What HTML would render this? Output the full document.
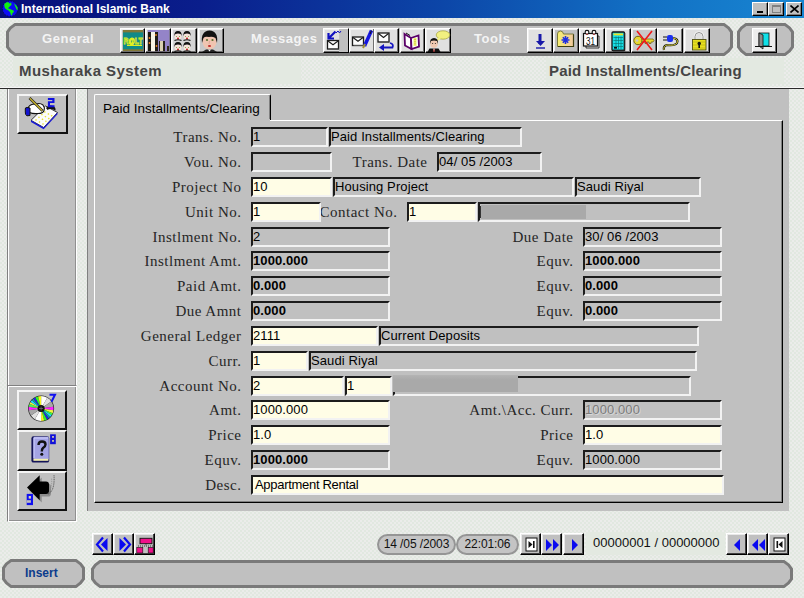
<!DOCTYPE html>
<html><head><meta charset="utf-8">
<style>
*{box-sizing:border-box;margin:0;padding:0}
html,body{width:804px;height:598px;overflow:hidden}
body{position:relative;background:#e6eae5 conic-gradient(#e1e8e0 25%,#ebecea 0 50%,#e1e8e0 0 75%,#ebecea 0) 0 0/4px 4px;font-family:"Liberation Sans",sans-serif;font-size:13px;color:#000}
.a{position:absolute}
#title{left:0;top:0;width:804px;height:18px;background:linear-gradient(90deg,#060f78 0%,#0a1e8c 25%,#0c46a8 55%,#1270c4 80%,#1886d2 100%)}
#title .t{left:21px;top:3px;color:#fff;font-weight:bold;font-size:12px;line-height:13px;white-space:nowrap}
.wb{top:2px;width:16px;height:14px;background:#c0c0c0;border:1px solid;border-color:#fff #000 #000 #fff;box-shadow:inset -1px -1px #808080}
.pill{border:3px solid #7a7a7a;background:#c0c0c0;border-radius:16px}
.tbt{color:#f4f4f4;font-weight:bold;font-size:13px;letter-spacing:0.55px;white-space:nowrap;top:32px;line-height:13px}
.ib{top:28px;width:25px;height:25px;background:#c0c0c0;border:1px solid;border-color:#fff #000 #000 #fff;box-shadow:inset -1px -1px #808080}
.ib svg{position:absolute;left:2px;top:2px}
.hdr{font-weight:bold;font-size:15px;color:#454545;top:63px;line-height:15px;white-space:nowrap}
.lbl{font-family:"Liberation Serif",serif;font-size:15px;line-height:15px;letter-spacing:0.5px;white-space:nowrap;text-align:right;color:#262626}
.f{height:20px;border:2px solid;border-color:#1c1c1c #f2f2f2 #f2f2f2 #1c1c1c;background:#c0c0c0;font-size:13px;line-height:14px;letter-spacing:0.1px;padding:1px 0 0 0;white-space:nowrap;overflow:hidden}
.y{background:#fffde6}
.desc{padding-left:2px;letter-spacing:-0.3px}
.b{font-weight:bold}
.dis{color:#7c7c7c;text-shadow:1px 1px #d8d8d8}
.blur{display:inline-block;height:11px;margin-top:2px;margin-left:1px;background:#9a9a9a;filter:blur(2px)}
.bt{border:1px solid;border-color:#fff #000 #000 #fff;box-shadow:inset -1px -1px #707070,inset 1px 1px #f0f0f0}
.bt2{z-index:2;border:2px solid;border-color:#f4f4f4 #101010 #101010 #f4f4f4}
.bt3{background:#c0c0c0;border:1px solid;border-color:#fff #000 #000 #fff;box-shadow:inset -1px -1px #404040,inset 1px 1px #e8e8e8}
.dp{border:2px solid #959595;background:#c4c4c4;border-radius:11px;font-size:12px;letter-spacing:-0.1px;line-height:15px;text-align:center;color:#111;white-space:nowrap;padding-top:1px}
.btn{background:#c0c0c0;border:1px solid;border-color:#fff #000 #000 #fff;box-shadow:inset -1px -1px #808080}
.nb{top:533px;width:21px;height:22px;background:#c0c0c0;border:1px solid;border-color:#fff #000 #000 #fff;box-shadow:inset -1px -1px #808080}
.nb svg{position:absolute;left:0;top:0}
</style></head><body>

<!-- title bar -->
<div id="title" class="a">
  <svg class="a" style="left:0;top:0" width="20" height="18" viewBox="0 0 20 18"><circle cx="10.2" cy="8.7" r="7.7" fill="#0c0cf6" stroke="#08083a" stroke-width="0.8" stroke-dasharray="1.2 1.6"/><path d="M4.2 4 Q6 2 8.5 2 L9 3.6 L11.2 2.6 L11.5 5 Q10 6 9.2 7 L8 8.2 L10.5 9.2 L13.5 10.5 L14 12 L12.5 13 L12 15.5 L11 15 L10 12 L8.5 10.5 L6.5 9.5 Q5 8.5 4.5 7Z" fill="#10f010"/><path d="M14 3.5 Q16 4.5 17.5 7 L17.8 10 L16.5 9.5 L15.5 7 Z" fill="#10f010"/></svg>
  <div class="a t">International Islamic Bank</div>
  <div class="a wb" style="left:752px"><div class="a" style="left:4px;top:8px;width:6px;height:2px;background:#000"></div></div>
  <div class="a wb" style="left:768px"><div class="a" style="left:3px;top:2px;width:9px;height:8px;border:1px solid #808080;border-top-width:2px"></div></div>
  <div class="a wb" style="left:786px"><svg class="a" style="left:3px;top:2px" width="9" height="8"><path d="M0.5 0.5 L8.5 7.5 M8.5 0.5 L0.5 7.5" stroke="#000" stroke-width="1.6"/></svg></div>
</div>

<!-- toolbar -->
<svg class="a" style="left:6px;top:23px" width="727" height="33"><path d="M9 1.5 L718 1.5 Q722.8 4.2 725.5 9 L725.5 24 Q722.8 28.8 718 31.5 L9 31.5 Q4.2 28.8 1.5 24 L1.5 9 Q4.2 4.2 9 1.5Z" fill="#c0c0c0" stroke="#7a7a7a" stroke-width="3"/></svg>
<div class="a tbt" style="left:42px">General</div>
<div class="a tbt" style="left:251px">Messages</div>
<div class="a tbt" style="left:474px">Tools</div>
<svg class="a" style="left:737px;top:23px" width="57" height="33"><path d="M9 1.5 L48 1.5 Q52.8 4.2 55.5 9 L55.5 24 Q52.8 28.8 48 31.5 L9 31.5 Q4.2 28.8 1.5 24 L1.5 9 Q4.2 4.2 9 1.5Z" fill="#c0c0c0" stroke="#7a7a7a" stroke-width="3"/></svg>

<div id="icons">
<div class="a bt" style="left:120px;top:28px;width:25px;height:25px;background:#c0c0c0"><svg class="a" style="left:0;top:0" width="25" height="25" viewBox="0 0 25 25"><rect x="2" y="1" width="20" height="21" fill="#807838"/><rect x="2" y="3.4" width="20" height="16.8" fill="#108a88"/><text x="12" y="14.5" font-family="Liberation Sans" font-weight="bold" font-size="8.5" textLength="19" lengthAdjust="spacingAndGlyphs" fill="none" stroke="#e0f020" stroke-width="0.8" text-anchor="middle">R@LT</text><path d="M6 16.5 H21" stroke="#e0f020" stroke-width="1"/></svg></div>
<div class="a bt" style="left:145px;top:28px;width:26px;height:25px;background:#c0c0c0"><svg class="a" style="left:0;top:0" width="26" height="25" viewBox="0 0 26 25"><rect x="2" y="1" width="21.4" height="21.2" fill="#9484c8"/><rect x="2" y="3" width="10" height="19.2" fill="#201c14"/><rect x="5" y="3" width="4" height="19.2" fill="#f8f4e4"/><rect x="13" y="12" width="6" height="10.2" fill="#28221a"/><rect x="14" y="12" width="3" height="10" fill="#d8d0b0"/><rect x="21" y="17" width="2" height="5" fill="#302818"/><circle cx="3.5" cy="9" r="0.9" fill="#f08020"/><circle cx="3.5" cy="14" r="0.9" fill="#f08020"/><circle cx="10" cy="6" r="0.9" fill="#f08020"/><circle cx="10.5" cy="17" r="0.9" fill="#f08020"/></svg></div>
<div class="a bt" style="left:171px;top:28px;width:26px;height:25px;background:#d4d4d4"><svg class="a" style="left:0;top:0" width="26" height="25" viewBox="0 0 26 25"><ellipse cx="6" cy="7.3" rx="3.3" ry="3.8" fill="#f6e4dc"/><path d="M2.4 7.0 Q2 2.0 6 2.0 Q10 2.0 9.6 7.0 L8.6 5.0 Q6 4.0 3.4 5.0Z" fill="#111"/><circle cx="4.5" cy="7.5" r="0.6" fill="#80a040"/><circle cx="7.5" cy="7.5" r="0.6" fill="#80a040"/><circle cx="6" cy="9.5" r="1" fill="#c02020"/><path d="M2.5 11.5 Q6 10.0 9.5 11.5" stroke="#111" stroke-width="1.2" fill="none"/><ellipse cx="15" cy="7.3" rx="3.3" ry="3.8" fill="#f6e4dc"/><path d="M11.4 7.0 Q11 2.0 15 2.0 Q19 2.0 18.6 7.0 L17.6 5.0 Q15 4.0 12.4 5.0Z" fill="#111"/><circle cx="13.5" cy="7.5" r="0.6" fill="#80a040"/><circle cx="16.5" cy="7.5" r="0.6" fill="#80a040"/><circle cx="15" cy="9.5" r="1" fill="#c02020"/><path d="M11.5 11.5 Q15 10.0 18.5 11.5" stroke="#111" stroke-width="1.2" fill="none"/><ellipse cx="6" cy="18.3" rx="3.3" ry="3.8" fill="#f6e4dc"/><path d="M2.4 18.0 Q2 13.0 6 13.0 Q10 13.0 9.6 18.0 L8.6 16.0 Q6 15.0 3.4 16.0Z" fill="#111"/><circle cx="4.5" cy="18.5" r="0.6" fill="#80a040"/><circle cx="7.5" cy="18.5" r="0.6" fill="#80a040"/><circle cx="6" cy="20.5" r="1" fill="#c02020"/><path d="M2.5 22.5 Q6 21.0 9.5 22.5" stroke="#111" stroke-width="1.2" fill="none"/><ellipse cx="15" cy="18.3" rx="3.3" ry="3.8" fill="#f6e4dc"/><path d="M11.4 18.0 Q11 13.0 15 13.0 Q19 13.0 18.6 18.0 L17.6 16.0 Q15 15.0 12.4 16.0Z" fill="#111"/><circle cx="13.5" cy="18.5" r="0.6" fill="#80a040"/><circle cx="16.5" cy="18.5" r="0.6" fill="#80a040"/><circle cx="15" cy="20.5" r="1" fill="#c02020"/><path d="M11.5 22.5 Q15 21.0 18.5 22.5" stroke="#111" stroke-width="1.2" fill="none"/></svg></div>
<div class="a bt" style="left:198px;top:28px;width:26px;height:25px;background:#c8c8c8"><svg class="a" style="left:0;top:0" width="26" height="25" viewBox="0 0 26 25"><ellipse cx="10.5" cy="12" rx="7.2" ry="8.5" fill="#f0c4b0"/><path d="M3 14 Q1.5 2 10.5 1.5 Q19.5 2 18 14 L16.5 9 Q13 7 10 8 Q6 7 4.5 9Z" fill="#111"/><circle cx="8" cy="11" r="1.1" fill="#587030"/><circle cx="13.5" cy="11" r="1.1" fill="#587030"/><path d="M10.5 12 L10 15" stroke="#d8a090" stroke-width="0.8"/><ellipse cx="10.5" cy="17" rx="1.6" ry="1.1" fill="#c03030"/><path d="M3 23 L7 20.5 L14 20.5 L18 23Z" fill="#222"/><path d="M9 20.5 L10.5 22.5 L12 20.5" fill="#fff"/></svg></div>
<div class="a bt" style="left:323px;top:28px;width:26px;height:25px;background:#e0e0e0"><svg class="a" style="left:0;top:0" width="26" height="25" viewBox="0 0 26 25"><rect x="15" y="0" width="9" height="23" fill="#c0c0c0"/><rect x="3.5" y="11.5" width="11" height="8.5" fill="#fcfcfc" stroke="#1a1a1a" stroke-width="1.3"/><path d="M14.5 20.0 H4.5 " stroke="#555" stroke-width="1"/><path d="M4.0 12.0 L9.0 15.75 L14.0 12.0" fill="none" stroke="#1a1a1a" stroke-width="1.1"/><path d="M11.5 2.5 L5 9 M4.5 4 V9.5 H10" stroke="#1010c0" stroke-width="2.2" fill="none"/><path d="M12 4 L14 2 L15.5 4 L17 2" stroke="#1010c0" stroke-width="1" fill="none"/></svg></div>
<div class="a bt" style="left:349px;top:28px;width:26px;height:25px;background:#e0e0e0"><svg class="a" style="left:0;top:0" width="26" height="25" viewBox="0 0 26 25"><rect x="2.5" y="8" width="11" height="8.5" fill="#fcfcfc" stroke="#1a1a1a" stroke-width="1.3"/><path d="M13.5 16.5 H3.5 " stroke="#555" stroke-width="1"/><path d="M3.0 8.5 L8.0 12.25 L13.0 8.5" fill="none" stroke="#1a1a1a" stroke-width="1.1"/><path d="M14.5 17 L21.5 1.5" stroke="#1515e0" stroke-width="3.5"/><path d="M21.5 1.5 L20 5" stroke="#111" stroke-width="1"/><path d="M13 19 L15 15" stroke="#a09030" stroke-width="2"/></svg></div>
<div class="a bt" style="left:374px;top:28px;width:25px;height:25px;background:#e0e0e0"><svg class="a" style="left:0;top:0" width="25" height="25" viewBox="0 0 25 25"><rect x="3" y="4" width="11" height="9" fill="#fcfcfc" stroke="#1a1a1a" stroke-width="1.3"/><path d="M14 13 H4 " stroke="#555" stroke-width="1"/><path d="M3.5 4.5 L8.5 8.5 L13.5 4.5" fill="none" stroke="#1a1a1a" stroke-width="1.1"/><path d="M15 14 Q19 15 17.5 18.5 L8 18.5" stroke="#1515c0" stroke-width="1.8" fill="none"/><path d="M4 18.5 L9 15 L9 22Z" fill="#1515c0"/></svg></div>
<div class="a bt" style="left:400px;top:28px;width:25px;height:25px;background:#e0e0e0"><svg class="a" style="left:0;top:0" width="25" height="25" viewBox="0 0 25 25"><path d="M3.5 5 L10 9 L10.5 20 L4 16.5Z" fill="#fff" stroke="#5a0068" stroke-width="1.8"/><path d="M10 9 L17.5 6.5 L18 17.5 L10.5 20Z" fill="#fff" stroke="#5a0068" stroke-width="1.8"/><path d="M5 4 L9 6.5" stroke="#111" stroke-width="1"/><rect x="12.5" y="9" width="3" height="8" fill="#f0f070"/><path d="M14 10 V16" stroke="#a0a020" stroke-width="0.8" stroke-dasharray="1 1.2"/></svg></div>
<div class="a bt" style="left:425px;top:28px;width:26px;height:25px;background:#e0e0e0"><svg class="a" style="left:0;top:0" width="26" height="25" viewBox="0 0 26 25"><ellipse cx="17" cy="6" rx="6.8" ry="4.2" fill="#f2f080" stroke="#a0a040" stroke-width="0.7"/><path d="M12 8.5 L10 13 L15 9.5Z" fill="#f2f080"/><ellipse cx="8" cy="14.5" rx="3.8" ry="4.4" fill="#f0c8b0"/><path d="M4 15 Q3.5 9 8 9 Q12.5 9 12 15 L11 12 Q8 11 5 12Z" fill="#111"/><circle cx="6.6" cy="14.5" r="0.6" fill="#333"/><circle cx="9.4" cy="14.5" r="0.6" fill="#333"/><path d="M1.5 23 L3.5 19.5 L12.5 19.5 L14.5 23Z" fill="#111"/><path d="M7 19.5 L8 20 L9 19.5 L8 23Z" fill="#fff"/><path d="M8 20 V23" stroke="#c02020" stroke-width="1"/></svg></div>
<div class="a bt" style="left:527px;top:28px;width:26px;height:25px;background:#e0e0e0"><svg class="a" style="left:0;top:0" width="26" height="25" viewBox="0 0 26 25"><path d="M12 5 V15" stroke="#1818a8" stroke-width="3"/><path d="M8 12 L12.5 17 L17 12Z" fill="#1818a8"/><path d="M8 19 H17" stroke="#1818a8" stroke-width="1.4"/></svg></div>
<div class="a bt" style="left:553px;top:28px;width:26px;height:25px;background:#c0c0c0"><svg class="a" style="left:0;top:0" width="26" height="25" viewBox="0 0 26 25"><defs><linearGradient id="fg" x1="0" x2="1"><stop offset="0" stop-color="#f8f070"/><stop offset="1" stop-color="#f0c8a0"/></linearGradient></defs><path d="M3.5 5 Q3.5 2 6.5 2 Q9 2 9.5 5 H19.5 V17.5 H3.5Z" fill="url(#fg)" stroke="#707030" stroke-width="0.9"/><path d="M4 17.5 H19.5 V5.5" stroke="#404010" stroke-width="1.2" fill="none"/><path d="M11.5 7 V15 M7.5 11 H15.5 M8.8 8.3 L14.2 13.7 M14.2 8.3 L8.8 13.7" stroke="#2030e0" stroke-width="1.6"/></svg></div>
<div class="a bt" style="left:579px;top:28px;width:26px;height:25px;background:#e0e0e0"><svg class="a" style="left:0;top:0" width="26" height="25" viewBox="0 0 26 25"><path d="M6 7 H19 V19 H6Z" fill="#e0e0e0" stroke="#222" stroke-width="0.9"/><rect x="3.5" y="4.5" width="14" height="12.5" fill="#fff" stroke="#111" stroke-width="1.2"/><circle cx="7" cy="3.3" r="1.9" fill="#fff" stroke="#111" stroke-width="1.1"/><circle cx="14" cy="3.3" r="1.9" fill="#fff" stroke="#111" stroke-width="1.1"/><circle cx="7" cy="5.2" r="0.7" fill="#d02020"/><circle cx="14" cy="5.2" r="0.7" fill="#d02020"/><text x="10.5" y="15.5" font-family="Liberation Sans" font-size="10" text-anchor="middle" fill="#111" textLength="9" lengthAdjust="spacingAndGlyphs">31</text></svg></div>
<div class="a bt" style="left:605px;top:28px;width:26px;height:25px;background:#e0e0e0"><svg class="a" style="left:0;top:0" width="26" height="25" viewBox="0 0 26 25"><rect x="6" y="3" width="12.5" height="18.5" rx="1" fill="#18e0e8" stroke="#111" stroke-width="1.3"/><path d="M18.5 4 V21.5 H7" stroke="#222" stroke-width="1.4" fill="none"/><rect x="7.5" y="4.5" width="9.5" height="1.8" fill="#f0e020"/><path d="M7.5 8.5 H17 M7.5 11.5 H17 M7.5 14.5 H17 M7.5 17.5 H17 M10 7.5 V20 M12.5 7.5 V20 M15 7.5 V20" stroke="#087878" stroke-width="0.7"/><rect x="8" y="18" width="3" height="1.6" fill="#111"/></svg></div>
<div class="a bt" style="left:631px;top:28px;width:26px;height:25px;background:#c8c8c8"><svg class="a" style="left:0;top:0" width="26" height="25" viewBox="0 0 26 25"><circle cx="6" cy="11.5" r="4.2" fill="#e8d830" stroke="#6a5a10" stroke-width="0.9"/><circle cx="5" cy="11.5" r="1.3" fill="#c8c8c8"/><path d="M10 10 H21 L22 11.5 L21 13 H19 V14.5 H17 V13 H15 V14.5 H13 V13 H10Z" fill="#e8d830" stroke="#6a5a10" stroke-width="0.7"/><path d="M5 2 L20 21 M20 2 L5 21" stroke="#f01818" stroke-width="1.6"/></svg></div>
<div class="a bt" style="left:657px;top:28px;width:26px;height:25px;background:#e0e0e0"><svg class="a" style="left:0;top:0" width="26" height="25" viewBox="0 0 26 25"><rect x="9" y="6" width="6" height="7" rx="2" fill="#1a30f0"/><path d="M5 8 H9 M5 11 H9" stroke="#111" stroke-width="1"/><path d="M15 9 Q21 10 19 14 Q17 17 9 16 Q5 17 6 21" stroke="#111" stroke-width="2.2" fill="none"/><path d="M15 9 Q21 10 19 14 Q17 17 9 16 Q5 17 6 21" stroke="#e8e040" stroke-width="0.9" fill="none"/></svg></div>
<div class="a bt" style="left:684px;top:28px;width:26px;height:25px;background:#e0e0e0"><svg class="a" style="left:0;top:0" width="26" height="25" viewBox="0 0 26 25"><path d="M10 11 V7.5 Q10 3.5 14 3.5 Q18 3.5 18 7.5 V11" stroke="#f8f8f8" stroke-width="2.2" fill="none"/><path d="M10 11 V7.5 Q10 3.5 14 3.5 Q18 3.5 18 7.5 V11" stroke="#777" stroke-width="0.8" fill="none"/><rect x="7.5" y="10.5" width="13.5" height="10.5" fill="#e8e020" stroke="#505010" stroke-width="0.9"/><path d="M8 13 H21 M8 16 H21 M8 19 H21" stroke="#b0a810" stroke-width="0.6"/><circle cx="14.2" cy="14.5" r="1.7" fill="#111"/><path d="M14.2 15 V19" stroke="#111" stroke-width="1.6"/></svg></div>
<div class="a bt" style="left:752px;top:28px;width:25px;height:25px;background:#ececec"><svg class="a" style="left:0;top:0" width="25" height="25" viewBox="0 0 25 25"><rect x="6" y="4" width="10" height="13" fill="#10e0e8" stroke="#111" stroke-width="0.8"/><path d="M6 4 L10 6 L10 20 L6 17Z" fill="#8a8a8a" stroke="#111" stroke-width="0.8"/><path d="M2 17.5 H19" stroke="#111" stroke-width="1"/></svg></div>
<div class="a bt2" style="left:17px;top:94px;width:51px;height:40px;background:#c0c0c0"><svg class="a" style="left:0;top:0" width="51" height="40" viewBox="0 0 51 40"><path d="M12 24.3 L26.5 10 L38.5 16.5 L24.7 31.5Z" fill="#fcfcfc" stroke="#222" stroke-width="0.9"/><path d="M12 24.3 L24.7 31.5 L38.5 16.5 L38.5 18.3 L24.7 33.2 L12 26Z" fill="#1818d8"/><path d="M16.5 24.5 L28 14 M20 26.5 L31.5 16 M23.5 28.5 L34.5 18" stroke="#e8e030" stroke-width="1.4" stroke-dasharray="1.4 2.6"/><path d="M27 12 Q30 8.5 34 10 Q37 11 36.5 14.5 L33 13 Q30 12.5 28.5 14Z" fill="#111"/><path d="M9.5 11 Q12 7.5 17 8 Q21 6.5 24 9 Q26 11.5 25 14.5 Q24 17.5 19 17.5 Q14 18 10.5 16.5Z" fill="#fff" stroke="#111" stroke-width="1.1"/><path d="M6.3 13 Q6 11.5 8 11.5 L11 12 L11 19.5 L8 19.8 Q6 19 6.3 16Z" fill="#1414d0" stroke="#111" stroke-width="1"/><path d="M10.5 2 L23.5 14.8" stroke="#222" stroke-width="2.6"/><path d="M10.8 2.3 L23.2 14.5" stroke="#c8b428" stroke-width="1.3"/><path d="M28.9 2 H35.5 V7 H31 V9.2 H35.5 V11.3 H28.9 V5.2 H33.3 V4 H28.9Z" fill="#1010e0"/></svg></div>
<div class="a bt2" style="left:17px;top:390px;width:50px;height:40px;background:#c0c0c0"><svg class="a" style="left:0;top:0" width="50" height="40" viewBox="0 0 50 40"><circle cx="22.1" cy="16.5" r="13.0" fill="#222"/><path d="M22.1 16.5 L22.10 4.10 A12.4 12.4 0 0 1 28.30 5.76Z" fill="#ffffff"/><path d="M22.1 16.5 L28.30 5.76 A12.4 12.4 0 0 1 32.26 9.39Z" fill="#e0e0e0"/><path d="M22.1 16.5 L32.26 9.39 A12.4 12.4 0 0 1 34.38 14.77Z" fill="#a8a8a8"/><path d="M22.1 16.5 L34.38 14.77 A12.4 12.4 0 0 1 34.38 18.23Z" fill="#ff20ff"/><path d="M22.1 16.5 L34.38 18.23 A12.4 12.4 0 0 1 33.60 21.15Z" fill="#f0f040"/><path d="M22.1 16.5 L33.60 21.15 A12.4 12.4 0 0 1 32.62 23.07Z" fill="#40ff40"/><path d="M22.1 16.5 L32.62 23.07 A12.4 12.4 0 0 1 31.31 24.80Z" fill="#20e0ff"/><path d="M22.1 16.5 L31.31 24.80 A12.4 12.4 0 0 1 29.73 26.27Z" fill="#10a0a0"/><path d="M22.1 16.5 L29.73 26.27 A12.4 12.4 0 0 1 27.92 27.45Z" fill="#2020f0"/><path d="M22.1 16.5 L27.92 27.45 A12.4 12.4 0 0 1 25.10 28.53Z" fill="#30f030"/><path d="M22.1 16.5 L25.10 28.53 A12.4 12.4 0 0 1 22.10 28.90Z" fill="#f8f820"/><path d="M22.1 16.5 L22.10 28.90 A12.4 12.4 0 0 1 15.90 27.24Z" fill="#ffffff"/><path d="M22.1 16.5 L15.90 27.24 A12.4 12.4 0 0 1 11.94 23.61Z" fill="#e0e0e0"/><path d="M22.1 16.5 L11.94 23.61 A12.4 12.4 0 0 1 9.82 18.23Z" fill="#a8a8a8"/><path d="M22.1 16.5 L9.82 18.23 A12.4 12.4 0 0 1 9.82 14.77Z" fill="#ff20ff"/><path d="M22.1 16.5 L9.82 14.77 A12.4 12.4 0 0 1 10.60 11.85Z" fill="#50f050"/><path d="M22.1 16.5 L10.60 11.85 A12.4 12.4 0 0 1 11.58 9.93Z" fill="#f0f040"/><path d="M22.1 16.5 L11.58 9.93 A12.4 12.4 0 0 1 12.89 8.20Z" fill="#20e0ff"/><path d="M22.1 16.5 L12.89 8.20 A12.4 12.4 0 0 1 14.47 6.73Z" fill="#10a0a0"/><path d="M22.1 16.5 L14.47 6.73 A12.4 12.4 0 0 1 16.28 5.55Z" fill="#2020f0"/><path d="M22.1 16.5 L16.28 5.55 A12.4 12.4 0 0 1 19.10 4.47Z" fill="#30f030"/><path d="M22.1 16.5 L19.10 4.47 A12.4 12.4 0 0 1 22.10 4.10Z" fill="#f8f820"/><circle cx="22.1" cy="16.5" r="3.6" fill="#111"/><path d="M20.1 16.5 H24.1 M22.1 14.5 V18.5" stroke="#777" stroke-width="0.7"/><path d="M30.5 2.7 H36 L32.5 9.7" stroke="#1010f0" stroke-width="2" fill="none"/></svg></div>
<div class="a bt2" style="left:17px;top:430px;width:50px;height:41px;background:#c0c0c0"><svg class="a" style="left:0;top:0" width="50" height="41" viewBox="0 0 50 41"><rect x="12.4" y="4.2" width="17.8" height="26.4" rx="2.2" fill="#14145a"/><rect x="14.4" y="4.8" width="15.4" height="22.6" rx="1.2" fill="#a4a4e4"/><path d="M15 6 H29 M15 6 V26" stroke="#d0d0ff" stroke-width="1"/><rect x="14.4" y="26.8" width="15" height="2" fill="#f4f0b0"/><path d="M19.5 13 Q19.5 9.5 23 9.5 Q26.5 9.5 26.5 12.5 Q26.5 14.5 24 16 Q22.8 17 22.8 19.5" stroke="#111" stroke-width="2.4" fill="none"/><circle cx="22.8" cy="22.2" r="1.5" fill="#111"/><rect x="31.1" y="2.3" width="5.7" height="9.9" fill="#1010d8"/><rect x="33.2" y="4" width="1.6" height="1.8" fill="#e8e0a0"/><rect x="33.2" y="8" width="1.6" height="1.8" fill="#e8e0a0"/></svg></div>
<div class="a bt2" style="left:17px;top:471px;width:50px;height:40px;background:#c0c0c0"><svg class="a" style="left:0;top:0" width="50" height="40" viewBox="0 0 50 40"><path d="M10 17 L22.7 4.5 V10.8 H29 Q32 10.8 32 14 V20.5 Q32 23.6 29 23.6 H22.7 V29.6Z" fill="#8c8c8c"/><path d="M8 14.6 L20.7 2.3 V8.4 H27 Q30 8.4 30 11.5 V18 Q30 21 27 21 H20.7 V27.2Z" fill="#000"/><path d="M29 21 Q36 18 35 2" stroke="#333" stroke-width="0.8" fill="none" stroke-dasharray="1 0.8"/><path d="M29.5 20 Q33.5 15 32.5 5" stroke="#777" stroke-width="0.6" fill="none" stroke-dasharray="1 1"/><rect x="7.7" y="20.9" width="6.3" height="11.2" fill="#1010f0"/><rect x="9.7" y="23" width="2.2" height="2.6" fill="#d8d8b0"/><rect x="7.7" y="27.2" width="4.2" height="2.6" fill="#c0c0c0"/><rect x="7.7" y="27.2" width="4.2" height="2.6" fill="#c0c0c0" opacity="0"/></svg></div>
</div><!--/icons-->

<!-- header -->
<div id="hg2" class="a" style="left:546px;top:58px;width:238px;height:26px;background:#e3e9e1"></div>
<div id="hg" class="a" style="left:13px;top:57px;width:288px;height:27px;background:#e3e9e1"></div>
<div class="a hdr" style="left:19px;letter-spacing:0.45px">Musharaka System</div>
<div class="a hdr" style="left:549px;letter-spacing:0.2px">Paid Installments/Clearing</div>
<div class="a" style="left:0;top:87px;width:804px;height:1px;background:#f6f6f6"></div>
<div class="a" style="left:0;top:88px;width:804px;height:1px;background:#2a2a2a"></div>

<!-- left panels -->
<div class="a" style="left:7px;top:89px;width:70px;height:297px;background:#c0c0c0;border-left:1px solid #808080;border-right:1px solid #fff;box-shadow:inset 1px 0 #fff,inset -1px 0 #909090"></div>
<div class="a" style="left:7px;top:385px;width:70px;height:137px;background:#c0c0c0;border:1px solid;border-color:#808080 #fff #fff #808080;box-shadow:inset 1px 1px #fff,inset -1px -1px #909090"></div>

<!-- main outer panel -->
<div class="a" style="left:87px;top:89px;width:702px;height:422px;background:#c0c0c0;border-left:1px solid #808080"></div>
<!-- tab -->
<div class="a" style="left:94px;top:94px;width:177px;height:27px;background:#c0c0c0;border-left:1px solid #fff;border-top:1px solid #fff;border-right:1px solid #000;border-radius:2px 2px 0 0;box-shadow:inset -1px 0 #808080"></div>
<div class="a" style="left:103px;top:102px;font-size:13.5px;line-height:14px;white-space:nowrap">Paid Installments/Clearing</div>
<!-- page -->
<div class="a" style="left:94px;top:120px;width:689px;height:383px;border:1px solid;border-color:#fff #000 #000 #fff;box-shadow:inset -1px -1px #808080"></div>
<div class="a" style="left:95px;top:119px;width:175px;height:2px;background:#c0c0c0"></div>

<div id="form">
<div class="a lbl" style="right:562.5px;top:130px">Trans. No.</div>
<div class="a f " style="left:251px;top:127px;width:77px">1</div>
<div class="a f " style="left:329px;top:127px;width:193px">Paid Installments/Clearing</div>
<div class="a lbl" style="right:562.5px;top:155px">Vou. No.</div>
<div class="a f " style="left:251px;top:152px;width:81px"></div>
<div class="a lbl" style="right:376.5px;top:155px">Trans. Date</div>
<div class="a f " style="left:437px;top:152px;width:105px">04/ 05 /2003</div>
<div class="a lbl" style="right:562.5px;top:180px">Project No</div>
<div class="a f y" style="left:251px;top:177px;width:81px">10</div>
<div class="a f " style="left:333px;top:177px;width:241px">Housing Project</div>
<div class="a f " style="left:575px;top:177px;width:126px">Saudi Riyal</div>
<div class="a lbl" style="right:562.5px;top:205px">Unit No.</div>
<div class="a lbl" style="right:406.5px;top:205px">Contact No.</div>
<div class="a f y" style="left:251px;top:202px;width:70px">1</div>
<div class="a f y" style="left:407px;top:202px;width:70px">1</div>
<div class="a f " style="left:478px;top:202px;width:212px"></div>
<div class="a" style="left:481px;top:205px;width:105px;height:14px;background:#a9a9a9"></div><div class="a" style="left:480px;top:206px;width:1px;height:12px;background:#333"></div>
<div class="a lbl" style="right:562.5px;top:230px">Instlment No.</div>
<div class="a f " style="left:251px;top:227px;width:139px">2</div>
<div class="a lbl" style="right:230.5px;top:230px">Due Date</div>
<div class="a f " style="left:583px;top:227px;width:139px">30/ 06 /2003</div>
<div class="a lbl" style="right:562.5px;top:254px">Instlment Amt.</div>
<div class="a f b" style="left:251px;top:251px;width:139px">1000.000</div>
<div class="a lbl" style="right:230.5px;top:254px">Equv.</div>
<div class="a f b" style="left:583px;top:251px;width:139px">1000.000</div>
<div class="a lbl" style="right:562.5px;top:279px">Paid Amt.</div>
<div class="a f b" style="left:251px;top:276px;width:139px">0.000</div>
<div class="a lbl" style="right:230.5px;top:279px">Equv.</div>
<div class="a f b" style="left:583px;top:276px;width:139px">0.000</div>
<div class="a lbl" style="right:562.5px;top:304px">Due Amnt</div>
<div class="a f b" style="left:251px;top:301px;width:139px">0.000</div>
<div class="a lbl" style="right:230.5px;top:304px">Equv.</div>
<div class="a f b" style="left:583px;top:301px;width:139px">0.000</div>
<div class="a lbl" style="right:562.5px;top:329px">General Ledger</div>
<div class="a f y" style="left:251px;top:326px;width:127px">2111</div>
<div class="a f " style="left:379px;top:326px;width:320px">Current Deposits</div>
<div class="a lbl" style="right:562.5px;top:354px">Curr.</div>
<div class="a f y" style="left:251px;top:351px;width:57px">1</div>
<div class="a f " style="left:309px;top:351px;width:388px">Saudi Riyal</div>
<div class="a lbl" style="right:562.5px;top:379px">Account No.</div>
<div class="a f y" style="left:251px;top:376px;width:93px">2</div>
<div class="a f y" style="left:345px;top:376px;width:47px">1</div>
<div class="a f " style="left:393px;top:376px;width:298px"></div>
<div class="a" style="left:393px;top:375px;width:125px;height:17px;background:linear-gradient(#b4b4b4,#a9a9a9 30%)"></div>
<div class="a lbl" style="right:562.5px;top:403px">Amt.</div>
<div class="a f y" style="left:251px;top:400px;width:139px">1000.000</div>
<div class="a lbl" style="right:230.5px;top:403px">Amt.\Acc. Curr.</div>
<div class="a f dis" style="left:583px;top:400px;width:139px">1000.000</div>
<div class="a lbl" style="right:562.5px;top:428px">Price</div>
<div class="a f y" style="left:251px;top:425px;width:139px">1.0</div>
<div class="a lbl" style="right:230.5px;top:428px">Price</div>
<div class="a f y" style="left:583px;top:425px;width:139px">1.0</div>
<div class="a lbl" style="right:562.5px;top:453px">Equv.</div>
<div class="a f b" style="left:251px;top:450px;width:139px">1000.000</div>
<div class="a lbl" style="right:230.5px;top:453px">Equv.</div>
<div class="a f " style="left:583px;top:450px;width:139px">1000.000</div>
<div class="a lbl" style="right:562.5px;top:478px">Desc.</div>
<div class="a f y desc" style="left:251px;top:475px;width:473px">Appartment Rental</div>
</div><!--/form-->

<!-- bottom nav -->
<div id="bottom">
<div class="a bt3" style="left:92px;top:533px;width:21px;height:22px"><svg class="a" style="left:0;top:0" width="21" height="22" viewBox="0 0 21 22"><path d="M8 10.5 L14.5 4 V17Z" fill="#0a0af0"/><path d="M10 3.5 L4 10.5 L10 17.5" stroke="#0a0af0" stroke-width="2.2" fill="none"/></svg></div>
<div class="a bt3" style="left:113px;top:533px;width:21px;height:22px"><svg class="a" style="left:0;top:0" width="21" height="22" viewBox="0 0 21 22"><path d="M12 10.5 L5.5 4 V17Z" fill="#0a0af0"/><path d="M10 3.5 L16 10.5 L10 17.5" stroke="#0a0af0" stroke-width="2.2" fill="none"/></svg></div>
<div class="a bt3" style="left:134px;top:533px;width:21px;height:22px"><svg class="a" style="left:0;top:0" width="21" height="22" viewBox="0 0 21 22"><rect x="5" y="4.3" width="12" height="5.4" fill="#f0108a" stroke="#111" stroke-width="0.9"/><path d="M11 9.7 V12 M3 12 H18" stroke="#111" stroke-width="0.8" stroke-dasharray="1 1"/><rect x="1.8" y="13.5" width="6" height="5.5" fill="#f0108a" stroke="#111" stroke-width="0.6"/><rect x="13.2" y="13.5" width="5" height="5.5" fill="#f0108a" stroke="#111" stroke-width="0.6"/></svg></div>
<div class="a bt3" style="left:520px;top:533px;width:21px;height:22px"><svg class="a" style="left:0;top:0" width="21" height="22" viewBox="0 0 21 22"><rect x="5" y="4" width="11" height="13" fill="#fff" stroke="#111" stroke-width="1"/><path d="M7.5 7 L11.5 10.5 L7.5 14Z" fill="#111"/><rect x="12" y="7" width="1.6" height="7" fill="#111"/></svg></div>
<div class="a bt3" style="left:541px;top:533px;width:21px;height:22px"><svg class="a" style="left:0;top:0" width="21" height="22" viewBox="0 0 21 22"><path d="M4 5 L10 11 L4 17Z" fill="#0a0af0"/><path d="M11 5 L17 11 L11 17Z" fill="#0a0af0"/></svg></div>
<div class="a bt3" style="left:563px;top:533px;width:21px;height:22px"><svg class="a" style="left:0;top:0" width="21" height="22" viewBox="0 0 21 22"><path d="M8 5 L14 11 L8 17Z" fill="#0a0af0"/></svg></div>
<div class="a bt3" style="left:726px;top:533px;width:21px;height:22px"><svg class="a" style="left:0;top:0" width="21" height="22" viewBox="0 0 21 22"><path d="M13 5 L7 11 L13 17Z" fill="#0a0af0"/></svg></div>
<div class="a bt3" style="left:747px;top:533px;width:21px;height:22px"><svg class="a" style="left:0;top:0" width="21" height="22" viewBox="0 0 21 22"><path d="M10 5 L4 11 L10 17Z" fill="#0a0af0"/><path d="M17 5 L11 11 L17 17Z" fill="#0a0af0"/></svg></div>
<div class="a bt3" style="left:768px;top:533px;width:21px;height:22px"><svg class="a" style="left:0;top:0" width="21" height="22" viewBox="0 0 21 22"><rect x="5" y="4" width="11" height="13" fill="#fff" stroke="#111" stroke-width="1"/><path d="M13.5 7 L9.5 10.5 L13.5 14Z" fill="#111"/><rect x="7.5" y="7" width="1.6" height="7" fill="#111"/></svg></div>
<div class="a dp" style="left:377px;top:534px;width:79px;height:21px">14 /05 /2003</div>
<div class="a dp" style="left:456px;top:534px;width:63px;height:21px">22:01:06</div>
<div class="a" style="left:586px;top:532px;width:139px;height:23px;background:#e3e9e1"></div>
<div class="a" style="left:593px;top:536px;font-size:13px;line-height:14px;white-space:nowrap;color:#111">00000001 / 00000000</div>
<svg class="a" style="left:2px;top:559px" width="83" height="29"><path d="M9 1.5 L74 1.5 Q78.8 4.2 81.5 9 L81.5 20 Q78.8 24.8 74 27.5 L9 27.5 Q4.2 24.8 1.5 20 L1.5 9 Q4.2 4.2 9 1.5Z" fill="#c0c0c0" stroke="#7a7a7a" stroke-width="3"/></svg>
<div class="a" style="left:25px;top:566px;font-size:12px;font-weight:bold;line-height:14px;color:#0c3c8c">Insert</div>
<svg class="a" style="left:91px;top:560px" width="702" height="28"><path d="M9 1.5 L693 1.5 Q697.8 4.2 700.5 9 L700.5 19 Q697.8 23.8 693 26.5 L9 26.5 Q4.2 23.8 1.5 19 L1.5 9 Q4.2 4.2 9 1.5Z" fill="#c0c0c0" stroke="#7a7a7a" stroke-width="3"/></svg>
</div><!--/bottom-->

</body></html>
